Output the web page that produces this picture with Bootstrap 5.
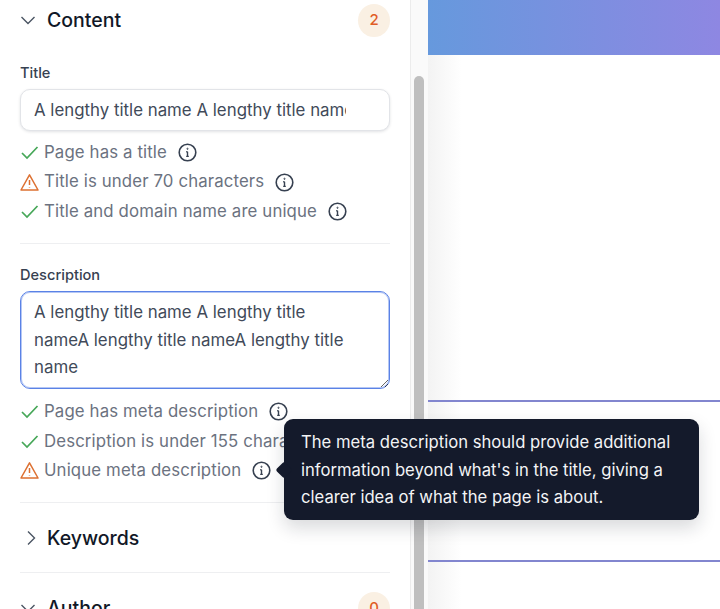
<!DOCTYPE html>
<html lang="en">
<head>
<meta charset="utf-8">
<title>SEO panel</title>
<link href="https://cdn.jsdelivr.net/npm/bootstrap@5.3.0/dist/css/bootstrap.min.css" rel="stylesheet">
<style>
html,body{height:609px;overflow:hidden}
body{font-family:Inter,"Liberation Sans",sans-serif;color:#111827;background:#fff}
.shell{height:609px;width:720px;overflow:hidden;position:relative}
.side{width:410px;flex:none;padding:0 20px;height:609px;overflow:hidden;background:#fff}
.gutter{width:18px;flex:none;height:609px;background:#fafafa;border-left:1px solid #ececec;padding:76px 3px 0 3px}
.thumb{height:533px;width:10px;background:#bfbfbf;border-radius:5px 5px 0 0}
.canvas{flex:1 1 auto;height:609px;background:linear-gradient(90deg,#f3f3f3 0,#fff 34px)}
.hero{height:55px;background:linear-gradient(90deg,#6699dd,#8e87e2)}
.rule1{height:2px;background:#8286cf;margin-top:345px}
.rule2{height:2px;background:#8286cf;margin-top:158px}
.sec-head{height:40px}
.sec-title{font-size:19.5px;font-weight:500;color:#111827;line-height:24px}
.chev{width:16px;height:16px;flex:none;margin-right:11px;stroke:#4b5563;fill:none;stroke-width:1.4}
.chev-r{margin-left:3px;margin-right:8px}
.count{width:32px;height:33px;border-radius:50%;background:#faf0e3;color:#e05d26;font-size:15px;font-weight:500}
.fld-label{font-size:14.6px;font-weight:500;color:#374151;line-height:20px;margin:0 0 6px}
.tinput,.tarea{font-family:Inter,"Liberation Sans",sans-serif;font-size:16.85px;color:#414a59;background:#fff;border-radius:10px;width:370px;display:block}
.tinput.form-control{height:42px;border:1px solid #e2e4e8;box-shadow:0 1px 3px rgba(17,24,39,.12);padding:0 13px;color:#414a59}
.tinput-clip{display:block;overflow:hidden;white-space:nowrap;width:312px;line-height:40px}
.tarea.form-control{height:98px;border:1px solid #5a82e6;padding:7px 35px 6px 13px;line-height:27.5px;resize:vertical;box-shadow:inset 0 0 0 1px rgba(90,130,230,.45);overflow:hidden;color:#414a59}
.checks{margin:7px 0 0;padding:0;list-style:none}
.checks-b{margin-top:8px}
.checks li{height:29.4px;font-size:16.8px;color:#6b7280;display:flex;align-items:center;white-space:nowrap;letter-spacing:.13px}
.stat{width:19px;height:19px;flex:none;margin-right:5px}
.tick{stroke:#46a758;fill:none;stroke-width:1.7}
.warn{stroke:#dd7031;fill:none;stroke-width:1.5}
.info{width:19px;height:19px;flex:none;margin-left:11px;stroke:#374151;fill:none;stroke-width:1.6}
.sep{height:1px;background:#eeeff1;margin:17px 0}
.sep-a{margin:17px 0 21px}
.sep-c{margin-bottom:15px}
.tipbox{position:absolute;left:284px;top:419px;width:415px;height:101px;background:#141a2b;color:#f3f4f6;border-radius:9px;font-size:16.65px;line-height:27.5px;padding:10px 17px;box-shadow:0 8px 18px rgba(17,24,39,.16)}
.tipbox::before{content:"";position:absolute;left:-6px;top:45px;width:12px;height:12px;background:#141a2b;transform:rotate(45deg);border-radius:2px}
</style>
</head>
<body>
<div class="shell d-flex">
  <aside class="side">
    <div class="sec-head d-flex align-items-center justify-content-between">
      <div class="d-flex align-items-center">
        <svg class="chev" viewBox="0 0 16 16"><path d="M1.5 5l6.5 6.5L14.5 5"/></svg>
        <span class="sec-title">Content</span>
      </div>
      <span class="count d-flex align-items-center justify-content-center">2</span>
    </div>
    <div style="height:23px"></div>
    <label class="fld-label d-block">Title</label>
    <div class="form-control tinput"><span class="tinput-clip">A lengthy title name A lengthy title name</span></div>
    <ul class="checks">
      <li><svg class="stat tick" viewBox="0 0 19 19"><path d="M2 10l5 5L17.5 4"/></svg>Page has a title<svg class="info" viewBox="0 0 19 19"><circle cx="9.5" cy="9.5" r="8.3"/><path d="M9.5 8.8v4.6M8.2 8.8h1.3M8.2 13.4h2.6" stroke-width="1.4"/><circle cx="9.5" cy="5.8" r=".6" stroke-width="1"/></svg></li>
      <li><svg class="stat warn" viewBox="0 0 19 19"><path d="M9.5 1.8L18 17H1z" stroke-linejoin="round"/><path d="M9.5 7v5M9.5 14v.6"/></svg>Title is under 70 characters<svg class="info" viewBox="0 0 19 19"><circle cx="9.5" cy="9.5" r="8.3"/><path d="M9.5 8.8v4.6M8.2 8.8h1.3M8.2 13.4h2.6" stroke-width="1.4"/><circle cx="9.5" cy="5.8" r=".6" stroke-width="1"/></svg></li>
      <li><svg class="stat tick" viewBox="0 0 19 19"><path d="M2 10l5 5L17.5 4"/></svg>Title and domain name are unique<svg class="info" viewBox="0 0 19 19"><circle cx="9.5" cy="9.5" r="8.3"/><path d="M9.5 8.8v4.6M8.2 8.8h1.3M8.2 13.4h2.6" stroke-width="1.4"/><circle cx="9.5" cy="5.8" r=".6" stroke-width="1"/></svg></li>
    </ul>
    <div class="sep sep-a"></div>
    <label class="fld-label d-block">Description</label>
    <textarea class="form-control tarea" rows="3">A lengthy title name A lengthy title nameA lengthy title nameA lengthy title name</textarea>
    <ul class="checks checks-b">
      <li><svg class="stat tick" viewBox="0 0 19 19"><path d="M2 10l5 5L17.5 4"/></svg>Page has meta description<svg class="info" viewBox="0 0 19 19"><circle cx="9.5" cy="9.5" r="8.3"/><path d="M9.5 8.8v4.6M8.2 8.8h1.3M8.2 13.4h2.6" stroke-width="1.4"/><circle cx="9.5" cy="5.8" r=".6" stroke-width="1"/></svg></li>
      <li><svg class="stat tick" viewBox="0 0 19 19"><path d="M2 10l5 5L17.5 4"/></svg><span>Description is under 155 chara</span></li>
      <li><svg class="stat warn" viewBox="0 0 19 19"><path d="M9.5 1.8L18 17H1z" stroke-linejoin="round"/><path d="M9.5 7v5M9.5 14v.6"/></svg>Unique meta description<svg class="info" viewBox="0 0 19 19"><circle cx="9.5" cy="9.5" r="8.3"/><path d="M9.5 8.8v4.6M8.2 8.8h1.3M8.2 13.4h2.6" stroke-width="1.4"/><circle cx="9.5" cy="5.8" r=".6" stroke-width="1"/></svg></li>
    </ul>
    <div class="sep"></div>
    <div class="sec-head d-flex align-items-center" style="height:35px">
      <svg class="chev chev-r" viewBox="0 0 16 16"><path d="M5 1.5l6.5 6.5L5 14.5"/></svg>
      <span class="sec-title">Keywords</span>
    </div>
    <div class="sep sep-c"></div>
    <div class="sec-head d-flex align-items-center justify-content-between">
      <div class="d-flex align-items-center">
        <svg class="chev" viewBox="0 0 16 16"><path d="M1.5 5l6.5 6.5L14.5 5"/></svg>
        <span class="sec-title">Author</span>
      </div>
      <span class="count d-flex align-items-center justify-content-center">0</span>
    </div>
  </aside>
  <div class="gutter"><div class="thumb"></div></div>
  <main class="canvas">
    <div class="hero"></div>
    <div class="rule1"></div>
    <div class="rule2"></div>
  </main>
  <div class="tipbox">The meta description should provide additional information beyond what's in the title, giving a clearer idea of what the page is about.</div>
</div>
<script src="https://cdn.jsdelivr.net/npm/bootstrap@5.3.0/dist/js/bootstrap.bundle.min.js"></script>
</body>
</html>
